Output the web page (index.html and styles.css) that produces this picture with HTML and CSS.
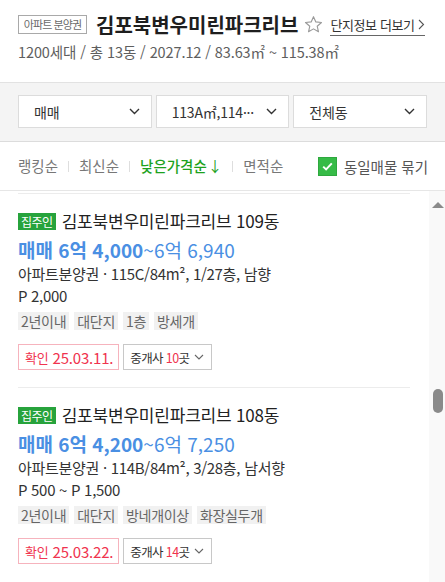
FILE: index.html
```html
<!DOCTYPE html>
<html lang="ko">
<head>
<meta charset="utf-8">
<link rel="stylesheet" href="styles.css">
</head>
<body>
<div class="page">
  <header class="header">
    <div class="head-row">
      <span class="kind">아파트 분양권</span>
      <h1 class="title">김포북변우미린파크리브</h1>
      <svg class="star" width="19" height="19" viewBox="0 0 20 20"><path d="M10 1.8l2.45 5.5 5.95.55-4.5 3.95 1.35 5.85L10 14.6l-5.25 3.05 1.35-5.85-4.5-3.95 5.95-.55z" fill="none" stroke="#9a9a9a" stroke-width="1.2" stroke-linejoin="round"/></svg>
      <a class="more">단지정보 더보기<svg class="more-chev" width="7" height="11" viewBox="0 0 7 11"><path d="M1 1l4.5 4.5L1 10" fill="none" stroke="#555" stroke-width="1.1"/></svg></a>
    </div>
    <div class="sub">1200세대 / 총 13동 / 2027.12 / 83.63㎡ ~ 115.38㎡</div>
  </header>

  <div class="filters">
    <div class="select"><span>매매</span><svg class="chev" width="11" height="7" viewBox="0 0 11 7"><path d="M1 1l4.5 4.5L10 1" fill="none" stroke="#333" stroke-width="1.4"/></svg></div>
    <div class="select"><span>113A㎡,114···</span><svg class="chev" width="11" height="7" viewBox="0 0 11 7"><path d="M1 1l4.5 4.5L10 1" fill="none" stroke="#333" stroke-width="1.4"/></svg></div>
    <div class="select"><span>전체동</span><svg class="chev" width="11" height="7" viewBox="0 0 11 7"><path d="M1 1l4.5 4.5L10 1" fill="none" stroke="#333" stroke-width="1.4"/></svg></div>
  </div>

  <div class="sortbar">
    <div class="sorts">
      <span class="sort">랭킹순</span>
      <span class="sep"></span>
      <span class="sort">최신순</span>
      <span class="sep"></span>
      <span class="sort active">낮은가격순<span class="arrow">↓</span></span>
      <span class="sep"></span>
      <span class="sort">면적순</span>
    </div>
    <label class="group">
      <span class="check"><svg width="11" height="9" viewBox="0 0 11 9"><path d="M1.2 4.6l2.9 2.8L9.8 1.4" fill="none" stroke="#fff" stroke-width="2"/></svg></span>
      <span>동일매물 묶기</span>
    </label>
  </div>

  <div class="list">
    <div class="items">
      <div class="item">
        <div class="item-head"><span class="owner">집주인</span><span class="name">김포북변우미린파크리브 109동</span></div>
        <div class="price"><b>매매 6억 4,000</b>~6억 6,940</div>
        <div class="spec">아파트분양권 · 115C/84m², 1/27층, 남향</div>
        <div class="prem">P 2,000</div>
        <div class="tags"><span class="tag">2년이내</span><span class="tag">대단지</span><span class="tag">1층</span><span class="tag">방세개</span></div>
        <div class="actions">
          <span class="confirm"><span class="c-lbl">확인</span> 25.03.11.</span>
          <span class="agents">중개사 <em>10</em>곳<svg class="a-chev" width="10" height="6" viewBox="0 0 10 6"><path d="M1 1l4 4 4-4" fill="none" stroke="#666" stroke-width="1.1"/></svg></span>
        </div>
      </div>
      <div class="item">
        <div class="item-head"><span class="owner">집주인</span><span class="name">김포북변우미린파크리브 108동</span></div>
        <div class="price"><b>매매 6억 4,200</b>~6억 7,250</div>
        <div class="spec">아파트분양권 · 114B/84m², 3/28층, 남서향</div>
        <div class="prem">P 500 ~ P 1,500</div>
        <div class="tags"><span class="tag">2년이내</span><span class="tag">대단지</span><span class="tag">방네개이상</span><span class="tag">화장실두개</span></div>
        <div class="actions">
          <span class="confirm"><span class="c-lbl">확인</span> 25.03.22.</span>
          <span class="agents">중개사 <em>14</em>곳<svg class="a-chev" width="10" height="6" viewBox="0 0 10 6"><path d="M1 1l4 4 4-4" fill="none" stroke="#666" stroke-width="1.1"/></svg></span>
        </div>
      </div>
    </div>
    <div class="scrollbar">
      <span class="sb-up"></span>
      <span class="sb-thumb"></span>
    </div>
  </div>
</div>
</body>
</html>
```

FILE: styles.css
```css
* { box-sizing: border-box; }
html, body { margin: 0; padding: 0; background: #fff; }
body {
  font-family: "Noto Sans CJK KR", "Noto Sans", sans-serif;
  color: #333;
  width: 445px;
  height: 582px;
  overflow: hidden;
}
.page { width: 445px; }

.header {
  height: 83px;
  padding: 15px 0 0 18px;
  border-bottom: 1px solid #e2e2e2;
}
.head-row {
  display: flex;
  align-items: center;
  height: 19px;
  white-space: nowrap;
}
.head-row > * { flex-shrink: 0; }
.kind {
  display: inline-flex;
  align-items: center;
  justify-content: center;
  width: 69px;
  height: 19px;
  border: 1px solid #a9a9a9;
  color: #6a6a6a;
  font-size: 11px;
  letter-spacing: -0.9px;
  line-height: 1;
}
.title {
  margin: 0 0 0 9px;
  font-size: 20px;
  font-weight: 700;
  letter-spacing: 0;
  color: #1e1e1e;
  line-height: 19px;
}
.star { margin-left: 6px; }
.more {
  display: inline-flex;
  align-items: center;
  margin-left: 7px;
  font-size: 13px;
  letter-spacing: -0.4px;
  color: #333;
  line-height: 18px;
  border-bottom: 1px solid #666;
  padding-bottom: 1px;
  margin-top: 2px;
}
.more-chev { margin-left: 3px; }
.sub {
  margin-top: 9px;
  font-size: 14.5px;
  color: #5e5e5e;
  line-height: 18px;
  letter-spacing: -0.1px;
  white-space: nowrap;
}

.filters {
  display: flex;
  gap: 4px;
  padding: 12px 18px 12px;
  background: #f4f4f4;
  border-bottom: 1px solid #dcdcdc;
  height: 59px;
}
.select {
  flex: 1;
  height: 33px;
  background: #fff;
  border: 1px solid #dcdcdc;
  display: flex;
  align-items: center;
  justify-content: space-between;
  padding: 0 11px 0 15px;
  font-size: 14px;
  color: #333;
  letter-spacing: -0.2px;
}

.sortbar {
  height: 49px;
  display: flex;
  align-items: center;
  justify-content: space-between;
  padding: 0 17px 0 18px;
  border-bottom: 1px solid #e6e6e6;
  white-space: nowrap;
}
.sorts { display: flex; align-items: center; }
.sort {
  font-size: 14.5px;
  color: #777;
  letter-spacing: 0;
  line-height: 20px;
}
.sort.active { color: #1da21d; font-weight: 500; }
.arrow { margin-left: 1px; font-weight: 400; }
.sep {
  width: 1px;
  height: 11px;
  background: #dedede;
  margin: 0 10px;
}
.group {
  display: flex;
  align-items: center;
  font-size: 14.5px;
  color: #555;
  letter-spacing: 0;
}
.check {
  width: 19px;
  height: 19px;
  background: #36bb47;
  border: 1px solid #2ea83e;
  display: inline-flex;
  align-items: center;
  justify-content: center;
  margin-right: 7px;
}

.list { display: flex; }
.items {
  width: 429px;
  padding: 2px 19px 0 18px;
}
.item {
  border-top: 1px solid #ececec;
  padding: 17px 0 17px;
}
.item-head {
  display: flex;
  align-items: center;
  height: 20px;
  white-space: nowrap;
}
.owner {
  display: inline-flex;
  align-items: center;
  height: 17px;
  padding: 0 3px;
  background: #27a33c;
  color: #fff;
  font-size: 12px;
  letter-spacing: -0.5px;
}
.name {
  margin-left: 6px;
  font-size: 17px;
  color: #222;
  letter-spacing: -0.2px;
  line-height: 20px;
}
.price {
  margin-top: 6px;
  height: 26px;
  line-height: 26px;
  font-size: 19px;
  color: #4a8fe3;
  letter-spacing: 0;
  white-space: nowrap;
}
.price b { font-weight: 700; }
.spec, .prem {
  height: 22px;
  line-height: 22px;
  font-size: 15px;
  color: #333;
  letter-spacing: -0.3px;
  white-space: nowrap;
}
.tags {
  display: flex;
  gap: 5px;
  margin-top: 5px;
}
.tag {
  height: 18px;
  line-height: 18px;
  padding: 0 3px;
  background: #f1f1f1;
  color: #666;
  font-size: 14px;
  letter-spacing: -0.3px;
}
.actions {
  display: flex;
  gap: 4px;
  margin-top: 14px;
}
.confirm {
  height: 26px;
  display: inline-flex;
  align-items: center;
  padding: 0 5px 0 6px;
  border: 1px solid #f6b3bd;
  color: #f0334e;
  font-size: 15px;
  letter-spacing: -0.2px;
  white-space: pre;
}
.c-lbl { font-size: 13px; }
.agents {
  height: 26px;
  display: inline-flex;
  align-items: center;
  padding: 0 7px 0 6px;
  border: 1px solid #c8c8c8;
  color: #333;
  font-size: 12.5px;
  letter-spacing: -0.6px;
  white-space: pre;
}
.agents em { font-style: normal; color: #f0334e; }
.a-chev { margin-left: 5px; }

.scrollbar {
  position: relative;
  width: 16px;
  height: 391px;
  background: #f9f9f9;
}
.sb-up {
  position: absolute;
  left: 3px;
  top: 11px;
  width: 0;
  height: 0;
  border-left: 6px solid transparent;
  border-right: 6px solid transparent;
  border-bottom: 6px solid #8a8a8a;
}
.sb-thumb {
  position: absolute;
  left: 4px;
  top: 198px;
  width: 10px;
  height: 24px;
  border-radius: 5px;
  background: #8a8a8a;
}
```
